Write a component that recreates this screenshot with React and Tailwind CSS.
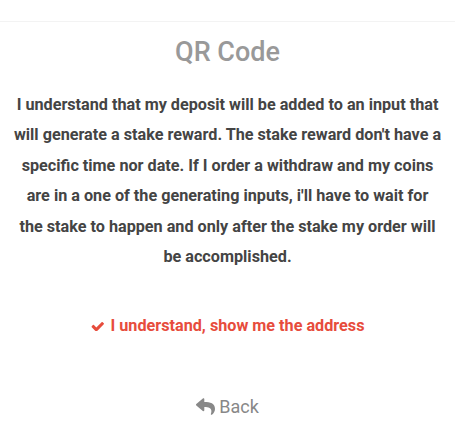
import { FaReply } from 'react-icons/fa';

// chunky check, same outline as the old font-awesome 4 glyph
function Check() {
  return (
    <svg viewBox="55 370 1616 1060" className="h-[9px] w-[13px] fill-current">
      <path d="M1671 566q0 40-28 68l-724 724-136 136q-28 28-68 28t-68-28l-136-136-362-362q-28-28-28-68t28-68l136-136q28-28 68-28t68 28l294 295 656-657q28-28 68-28t68 28l136 136q28 28 28 68z" />
    </svg>
  );
}

export default function App() {
  return (
    <div className="min-h-[434px] bg-white font-['Roboto',sans-serif]">
      <div className="h-[22px] border-b border-[#f3f3f3]" />
      <div className="mx-auto max-w-[428px] text-center">
        <h1 className="mt-[14px] text-[27px] font-medium leading-[32px] text-[#999999]">QR Code</h1>
        <p className="mt-[22px] text-[16.2px] font-bold leading-[30.4px] text-[#444444]">
          I understand that my deposit will be added to an input that will generate a stake reward. The stake reward don't have a specific time nor date. If I order a withdraw and my coins are in a one of the generating inputs, i'll have to wait for the stake to happen and only after the stake my order will be accomplished.
        </p>
        <button className="mt-[42px] inline-flex items-center gap-[7px] text-[16.2px] font-bold text-[#e74c3c]">
          <Check />
          I understand, show me the address
        </button>
        <div className="mt-[54px]">
          <button className="inline-flex items-center gap-[4px] text-[18px] text-[#888888]">
            <FaReply className="text-[19px]" />
            Back
          </button>
        </div>
      </div>
    </div>
  );
}
